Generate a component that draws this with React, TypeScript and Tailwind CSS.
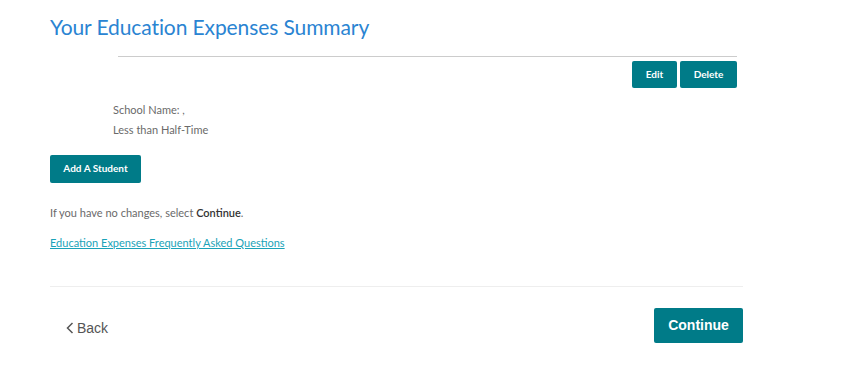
import React from 'react';

export default function App() {
  const avenir = { fontFamily: 'Lato, "Open Sans", sans-serif' };
  return (
    <div className="w-[850px] h-[372px] bg-white" style={avenir}>
      <div className="pl-[50px] w-[743px] flex flex-col">
        <h1 className="pt-[13px] text-[21px] leading-[28px] text-[#2a84d2] font-normal tracking-[-0.1px]">
          Your Education Expenses Summary
        </h1>

        {/* student card */}
        <div className="ml-[68px] mt-[15px] w-[619px] border-t border-[#cccccc]">
          <div className="flex justify-end gap-[3px] pt-[4px]">
            <button className="w-[45px] h-[27px] rounded-[2px] bg-[#007b88] text-white text-[10px] font-bold">
              Edit
            </button>
            <button className="w-[57px] h-[27px] rounded-[2px] bg-[#007b88] text-white text-[10px] font-bold">
              Delete
            </button>
          </div>
        </div>
        <div className="ml-[63px] mt-[15px] flex flex-col gap-[6px] text-[11px] leading-[14px] text-[#6a6a6a]">
          <div>School Name: ,</div>
          <div>Less than Half-Time</div>
        </div>

        <div className="mt-[17px]">
          <button className="w-[91px] h-[28px] rounded-[2px] bg-[#007b88] text-white text-[10px] font-bold">
            Add A Student
          </button>
        </div>

        <p className="mt-[23px] text-[11px] leading-[14px] text-[#6a6a6a]">
          If you have no changes, select <span className="font-semibold text-[#333333]">Continue</span>.
        </p>

        <a href="#" className="mt-[16px] self-start text-[11px] leading-[14px] text-[#1aa3b8] underline">
          Education Expenses Frequently Asked Questions
        </a>

        <div className="mt-[36px] border-t border-[#eeeeee]" />

        <div className="mt-[21px] flex items-center justify-between" style={{ fontFamily: '"Liberation Sans", Arial, sans-serif' }}>
          <button className="ml-[16px] pt-[6px] flex items-center gap-[3px] text-[14px] text-[#555555]">
            <svg width="8" height="12" viewBox="0 0 8 12" fill="none">
              <path d="M6.5 1 L1.5 6 L6.5 11" stroke="#555555" strokeWidth="1.5" />
            </svg>
            Back
          </button>
          <button className="w-[89px] h-[35px] rounded-[2px] bg-[#007b88] text-white text-[14px] font-bold">
            Continue
          </button>
        </div>
      </div>
    </div>
  );
}
